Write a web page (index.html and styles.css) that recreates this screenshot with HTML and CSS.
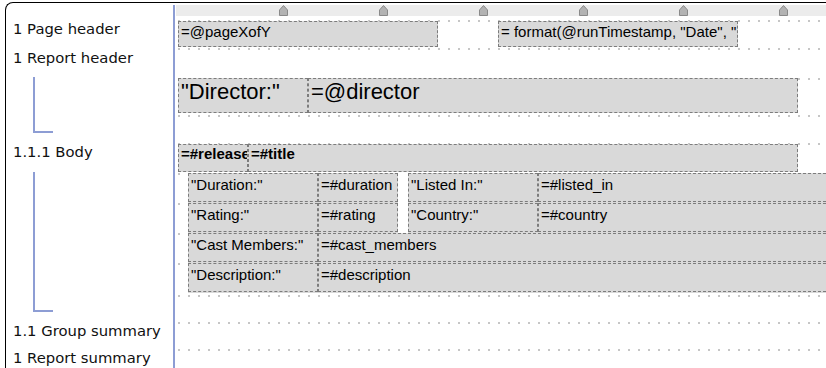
FILE: index.html
```html
<!DOCTYPE html>
<html lang="en">
<head>
  <meta charset="UTF-8">
  <title>Report Designer</title>
  <link rel="stylesheet" href="styles.css">
</head>
<body>
  <div class="frame">
    <div class="outline">
      <div class="spacer"></div>
      <div class="sec sec-page">
        <div class="label">1 Page header</div>
      </div>
      <div class="sec sec-report">
        <div class="label">1 Report header</div>
        <div class="tree tree-report"></div>
      </div>
      <div class="sec sec-body">
        <div class="label">1.1.1 Body</div>
        <div class="tree tree-body"></div>
      </div>
      <div class="sec sec-group">
        <div class="label">1.1 Group summary</div>
      </div>
      <div class="sec">
        <div class="label">1 Report summary</div>
      </div>
    </div>

    <div class="divider"></div>

    <div class="canvas">
      <div class="ruler">
        <div class="ruler-strip">
          <svg class="marker" width="9" height="11" viewBox="0 0 9 11"><path d="M0.5 10.5 V5 L4.5 0.5 L8.5 5 V10.5 Z" fill="#b3b3b3" stroke="#8a8a8a"/></svg>
          <svg class="marker" width="9" height="11" viewBox="0 0 9 11"><path d="M0.5 10.5 V5 L4.5 0.5 L8.5 5 V10.5 Z" fill="#b3b3b3" stroke="#8a8a8a"/></svg>
          <svg class="marker" width="9" height="11" viewBox="0 0 9 11"><path d="M0.5 10.5 V5 L4.5 0.5 L8.5 5 V10.5 Z" fill="#b3b3b3" stroke="#8a8a8a"/></svg>
          <svg class="marker" width="9" height="11" viewBox="0 0 9 11"><path d="M0.5 10.5 V5 L4.5 0.5 L8.5 5 V10.5 Z" fill="#b3b3b3" stroke="#8a8a8a"/></svg>
          <svg class="marker" width="9" height="11" viewBox="0 0 9 11"><path d="M0.5 10.5 V5 L4.5 0.5 L8.5 5 V10.5 Z" fill="#b3b3b3" stroke="#8a8a8a"/></svg>
          <svg class="marker" width="9" height="11" viewBox="0 0 9 11"><path d="M0.5 10.5 V5 L4.5 0.5 L8.5 5 V10.5 Z" fill="#b3b3b3" stroke="#8a8a8a"/></svg>
        </div>
      </div>

      <!-- page header -->
      <div class="line line-page">
        <div class="field f-page">=@pageXofY</div>
        <div class="field f-date">= format(@runTimestamp, "Date", "</div>
      </div>

      <!-- report header -->
      <div class="line line-empty"></div>
      <div class="line line-director">
        <div class="field big f-dir-label">"Director:"</div>
        <div class="field big f-dir-value">=@director</div>
      </div>
      <div class="line line-empty2"></div>

      <!-- body -->
      <div class="line line-title">
        <div class="field bold f-release">=#release</div>
        <div class="field bold f-title">=#title</div>
      </div>
      <div class="line line-detail">
        <div class="detail">
          <div class="field f-label">"Duration:"</div>
          <div class="field f-short">=#duration</div>
          <div class="gap"></div>
          <div class="field f-label">"Listed In:"</div>
          <div class="field f-rest">=#listed_in</div>
        </div>
      </div>
      <div class="line line-detail">
        <div class="detail">
          <div class="field f-label">"Rating:"</div>
          <div class="field f-short">=#rating</div>
          <div class="gap"></div>
          <div class="field f-label">"Country:"</div>
          <div class="field f-rest">=#country</div>
        </div>
      </div>
      <div class="line line-detail">
        <div class="detail">
          <div class="field f-label">"Cast Members:"</div>
          <div class="field f-rest">=#cast_members</div>
        </div>
      </div>
      <div class="line line-detail line-last">
        <div class="detail">
          <div class="field f-label">"Description:"</div>
          <div class="field f-rest">=#description</div>
        </div>
      </div>

      <!-- summaries -->
      <div class="line line-sum"></div>
      <div class="line line-sum"></div>
      <div class="line line-end"></div>
    </div>
  </div>
</body>
</html>
```

FILE: styles.css
```css
html, body {
  margin: 0;
  overflow: hidden;
  background: #fff;
}

.frame {
  display: flex;
  height: 366px;
  margin: 2px 0 0 5px;
  border-top: 1px solid #000;
  border-left: 1px solid #000;
  border-top-left-radius: 8px;
  overflow: hidden;
}

/* left outline */
.outline {
  flex: none;
  width: 167px;
  font-family: "DejaVu Sans", sans-serif;
  font-size: 14.8px;
  color: #111;
}

.spacer {
  height: 17px;
}

.sec {
  height: 27px;
}

.sec-page {
  height: 28px;
}

.sec-report {
  height: 95px;
}

.sec-body {
  height: 179px;
}

.label {
  line-height: 17px;
  padding-left: 7px;
  white-space: nowrap;
}

.sec-report .label {
  padding-top: 1px;
}

.tree {
  box-sizing: border-box;
  width: 20px;
  margin: 12px 0 0 27px;
  border-left: 2px solid #8d9dd4;
  border-bottom: 2px solid #8d9dd4;
}

.sec-report .tree {
  margin-top: 11px;
}

.tree-report {
  height: 56px;
}

.tree-body {
  height: 140px;
}

.divider {
  flex: none;
  width: 2px;
  margin-top: 2px;
  background: #8d9dd4;
}

/* design canvas */
.canvas {
  flex: 1;
  min-width: 0;
  padding-left: 3px;
  overflow: hidden;
}

.ruler {
  height: 17px;
  padding-top: 2px;
  box-sizing: border-box;
  margin-left: -2px;
}

.ruler-strip {
  display: flex;
  align-items: flex-start;
  gap: 91px;
  height: 11px;
  padding-left: 103px;
  background: #ececec;
}

.marker {
  display: block;
  flex: none;
}

.line {
  display: flex;
  align-items: flex-start;
  background-image: linear-gradient(90deg, #c6c6c6 2px, transparent 2px);
  background-size: 10px 2px;
  background-repeat: repeat-x;
  background-position: 0 0;
}

.line-page { height: 28px; gap: 60px; }
.line-empty { height: 30px; }
.line-director { height: 37px; }
.line-empty2 { height: 28px; }
.line-title { height: 30px; }
.line-detail { height: 30px; }
.line-last { height: 32px; }
.line-sum { height: 27px; }
.line-end { height: 19px; }

.field {
  box-sizing: border-box;
  flex: none;
  border: 1px dashed #7c7c7c;
  background: #d9d9d9;
  padding: 1px 2px 0;
  font-family: "Liberation Sans", Arial, sans-serif;
  font-size: 15px;
  line-height: 17px;
  color: #000;
  white-space: nowrap;
  overflow: hidden;
}

.f-page {
  width: 260px;
  height: 26px;
  margin-top: 1px;
}

.f-date {
  width: 240px;
  height: 26px;
  margin-top: 1px;
}

.big {
  height: 35px;
  padding-top: 0;
  font-size: 22px;
  line-height: 25px;
}

.f-dir-label { width: 130px; }
.f-dir-value { width: 490px; }

.bold {
  height: 28px;
  margin-top: 1px;
  padding-top: 0;
  font-weight: bold;
}

.f-release { width: 70px; }
.f-title { width: 550px; }

.detail {
  display: flex;
  align-items: flex-start;
  flex: 1;
  min-width: 0;
  height: 30px;
  margin-left: 10px;
  background: #d9d9d9;
}

.detail .field {
  height: 29px;
  padding-top: 2px;
}

.f-label { width: 130px; }
.f-short { width: 80px; }
.f-rest { flex: 1; min-width: 0; border-right: none; }

.gap {
  flex: none;
  width: 10px;
  height: 30px;
  background: #fff;
}
```
